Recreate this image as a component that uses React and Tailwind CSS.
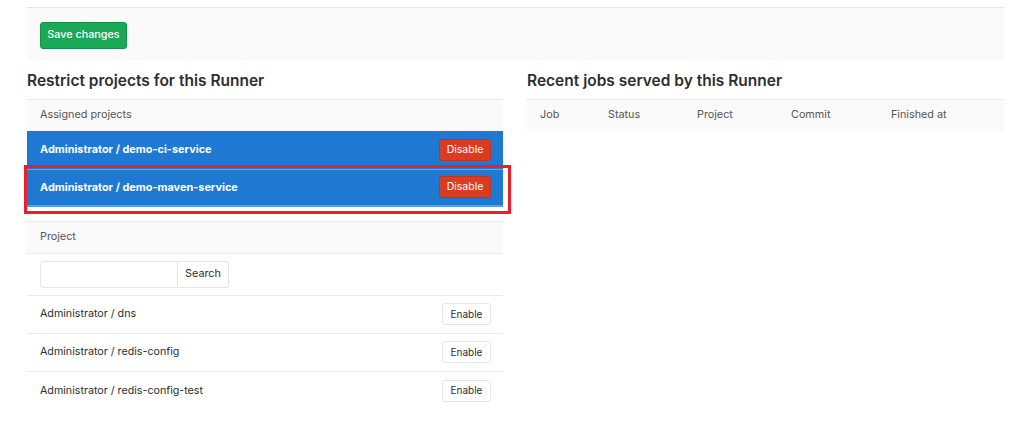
const font = { fontFamily: 'Inter, "Noto Sans", sans-serif' };

const assigned = ['Administrator / demo-ci-service', 'Administrator / demo-maven-service'];
const available = ['Administrator / dns', 'Administrator / redis-config', 'Administrator / redis-config-test'];
const jobCols = [
  { label: 'Job', w: 'w-[68px]' },
  { label: 'Status', w: 'w-[89px]' },
  { label: 'Project', w: 'w-[94px]' },
  { label: 'Commit', w: 'w-[100px]' },
  { label: 'Finished at', w: 'w-auto' },
];

function AssignedRow({ name, highlighted }) {
  return (
    <div className={`relative flex h-[38px] items-center justify-between bg-[#1f78d1] pl-[13px] pr-[12px] ${highlighted ? 'border-t border-[#6aa5e0] border-b-2 border-b-[#5d9de0]' : ''}`}>
      <span className="text-[10.9px] font-bold text-white">{name}</span>
      <button className="h-[22px] w-[52px] rounded-[3px] border border-[#c0341d] bg-[#db3b21] text-[10.5px] text-white">Disable</button>
      {highlighted && (
        <div className="pointer-events-none absolute -left-[3px] -right-[8px] -top-[5px] -bottom-[9px] border-[3px] border-[#e8202a]" />
      )}
    </div>
  );
}

export default function App() {
  return (
    <div className="min-h-screen bg-white text-[#2e2e2e]" style={font}>
      <div className="pl-[27px] pt-[7px] w-[1004px]">
        <div className="border-t border-[#e5e5e5] bg-[#fafafa] px-[13px] pt-[12px] pb-[11px]">
          <button className="h-[27px] w-[87px] rounded-[3px] border border-[#168f48] bg-[#1aaa55] text-[10.8px] font-medium text-white">
            Save changes
          </button>
        </div>

        <div className="flex gap-[24px] pt-[11px]">
          <div className="w-[476px]">
            <h4 className="h-[28px] text-[15.5px] font-semibold leading-[20px] text-[#2e2e2e]">Restrict projects for this Runner</h4>
            <div className="flex h-[32px] items-center border-t border-[#eaeaea] bg-[#fafafa] pl-[13px] text-[10.8px] text-[#555]">
              Assigned projects
            </div>
            <AssignedRow name={assigned[0]} />
            <AssignedRow name={assigned[1]} highlighted />

            <div className="mt-[14px] flex h-[33px] items-center border-y border-[#eaeaea] bg-[#fafafa] pl-[13px] text-[10.8px] text-[#555]">
              Project
            </div>
            <div className="flex h-[42px] items-center border-b border-[#eaeaea] pl-[13px]">
              <input className="h-[27px] w-[138px] rounded-l-[3px] border border-[#e5e5e5] bg-white outline-none" />
              <button className="h-[27px] w-[51px] rounded-r-[3px] border border-l-0 border-[#e5e5e5] bg-white text-[10.8px] text-[#2e2e2e]">
                Search
              </button>
            </div>
            {available.map((name, i) => (
              <div key={name} className={`flex h-[38px] items-center justify-between pl-[13px] pr-[12px] ${i < available.length - 1 ? 'border-b border-[#eaeaea]' : ''}`}>
                <span className="text-[10.7px] text-[#2e2e2e]">{name}</span>
                <button className="h-[22px] w-[49px] rounded-[3px] border border-[#e5e5e5] bg-white text-[10px] text-[#2e2e2e]">Enable</button>
              </div>
            ))}
          </div>

          <div className="w-[477px]">
            <h4 className="h-[28px] text-[15.5px] font-semibold leading-[20px] text-[#2e2e2e]">Recent jobs served by this Runner</h4>
            <div className="flex h-[32px] items-center border-t border-[#eaeaea] bg-[#fafafa] pl-[13px] text-[10.8px] text-[#555]">
              {jobCols.map((c) => (
                <span key={c.label} className={c.w}>{c.label}</span>
              ))}
            </div>
          </div>
        </div>
      </div>
    </div>
  );
}
